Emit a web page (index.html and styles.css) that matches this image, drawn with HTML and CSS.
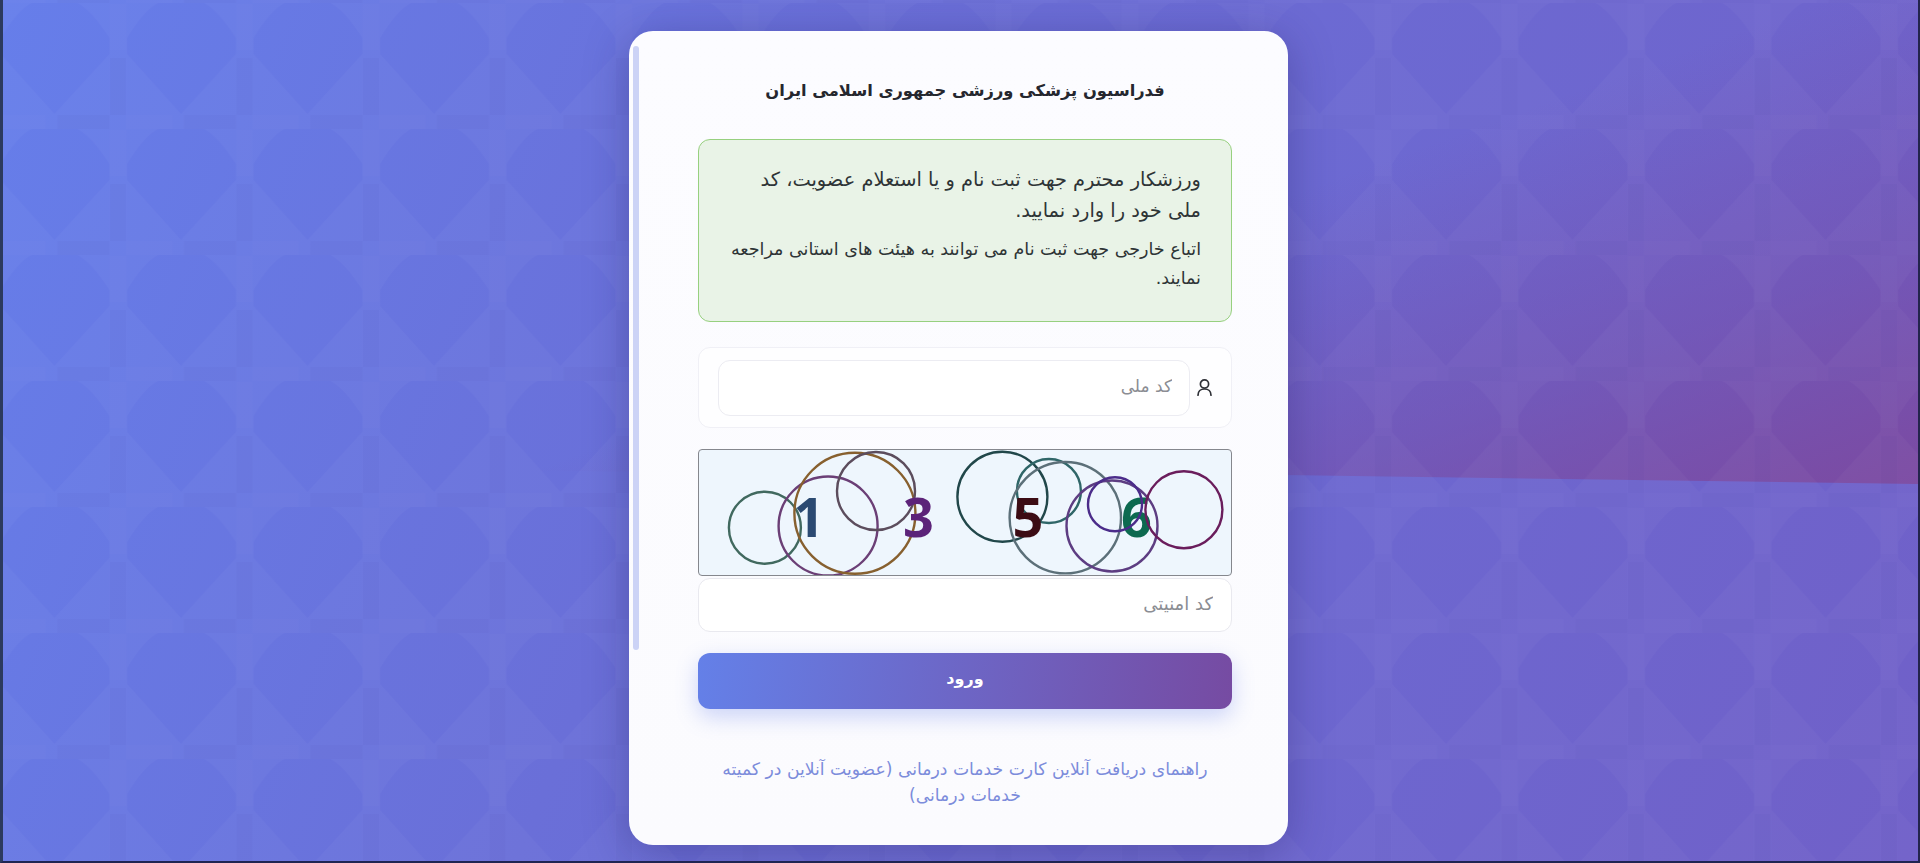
FILE: index.html
```html
<!DOCTYPE html>
<html lang="fa" dir="rtl">
<head>
<meta charset="utf-8">
<title>فدراسیون پزشکی ورزشی جمهوری اسلامی ایران</title>
<link rel="stylesheet" href="styles.css">
</head>
<body>
<main class="stage">
  <div class="tint"></div>
  <svg class="pattern" aria-hidden="true" width="100%" height="100%">
    <defs>
      <pattern id="tile" patternUnits="userSpaceOnUse" x="115" y="122" width="126.5" height="126">
        <path class="tile-light" fill-rule="evenodd" d="M0 0H126.5V126H0Z M40 7H86Q100 14 118 42V58L63 118L9 58V42Q26 14 40 7Z"/>
        <rect class="tile-bright" x="0" y="8" width="8" height="46"/>
        <rect class="tile-bright" x="118.5" y="8" width="8" height="46"/>
        <rect class="tile-bright" x="8" y="0" width="46" height="7"/>
        <rect class="tile-bright" x="8" y="119" width="46" height="7"/>
        <rect class="tile-dark" x="0" y="62" width="8" height="57"/>
        <rect class="tile-dark" x="118.5" y="62" width="8" height="57"/>
        <rect class="tile-dark" x="66" y="0" width="52" height="7"/>
        <rect class="tile-dark" x="66" y="119" width="52" height="7"/>
      </pattern>
    </defs>
    <rect width="100%" height="100%" fill="url(#tile)"/>
  </svg>

  <section class="card">
    <span class="scroll-thumb"></span>
    <h1 class="title">فدراسیون پزشکی ورزشی جمهوری اسلامی ایران</h1>

    <div class="notice">
      <p class="notice-main">ورزشکار محترم جهت ثبت نام و یا استعلام عضویت، کد ملی خود را وارد نمایید.</p>
      <p class="notice-sub">اتباع خارجی جهت ثبت نام می توانند به هیئت های استانی مراجعه نمایند.</p>
    </div>

    <div class="id-group">
      <span class="id-icon">
        <svg viewBox="0 0 15 17" width="15" height="17" fill="none" stroke="#2f3137" stroke-width="1.7" stroke-linecap="round">
          <circle cx="7.5" cy="5" r="4.1"/>
          <path d="M1 16.2C1 12.4 3.6 10 7.5 10S14 12.4 14 16.2"/>
        </svg>
      </span>
      <input class="id-input" type="text" placeholder="کد ملی">
    </div>

    <div class="captcha">
      <svg viewBox="0 0 532 125" width="532" height="125" fill="none" stroke-width="2.4">
        <circle cx="65.9" cy="77.7" r="36" stroke="#41695f"/>
        <circle cx="129.1" cy="76" r="49.5" stroke="#6b3f76"/>
        <circle cx="155.9" cy="63.3" r="60.5" stroke="#87602f"/>
        <circle cx="177" cy="41" r="39" stroke="#5c4d5d"/>
        <text class="digit" x="110" y="87" fill="#2b4a72">1</text>
        <text class="digit" x="219.5" y="87" fill="#5c2379">3</text>
        <circle cx="303.4" cy="46.7" r="45" stroke="#21474a"/>
        <circle cx="349.9" cy="41" r="32" stroke="#2f6668"/>
        <circle cx="366.3" cy="67.7" r="55.7" stroke="#5c7079"/>
        <text class="digit" x="329" y="87" fill="#3c0c14">5</text>
        <text class="digit" x="437.4" y="87" fill="#0d6a50">6</text>
        <circle cx="413" cy="76" r="45.5" stroke="#5d3d82"/>
        <circle cx="416" cy="54.3" r="27" stroke="#4b2c8a"/>
        <circle cx="484.9" cy="59.7" r="38.5" stroke="#6a1d5c"/>
      </svg>
    </div>

    <input class="code-input" type="text" placeholder="کد امنیتی">

    <button class="submit" type="button">ورود</button>

    <a class="guide" href="#">راهنمای دریافت آنلاین کارت خدمات درمانی (عضویت آنلاین در کمیته خدمات درمانی)</a>
  </section>
</main>
</body>
</html>
```

FILE: styles.css
```css
* { box-sizing: border-box; }

html, body {
  margin: 0;
  height: 100%;
  overflow: hidden;
}

body {
  font-family: "DejaVu Sans", "Noto Sans", sans-serif;
  color: #24262c;
}

.stage {
  position: relative;
  width: 1920px;
  height: 863px;
  display: flex;
  justify-content: center;
  align-items: flex-start;
  padding-right: 4px;
  border-left: 3px solid #2c3a5e;
  border-right: 2px solid #23244c;
  border-bottom: 2px solid #1f2552;
  background: linear-gradient(112deg, #667eea 0%, #6a6fd8 38%, #7060c8 100%);
  overflow: hidden;
}

.tint {
  position: absolute;
  inset: 0 0 auto 0;
  height: 486px;
  clip-path: polygon(0 0, 100% 0, 100% 484px, 1280px 475px, 0 468px);
  background: linear-gradient(160deg, rgba(120, 72, 160, 0) 56%, rgba(120, 72, 160, 0.45) 80%, rgba(124, 72, 158, 0.92) 100%);
}

.pattern {
  position: absolute;
  inset: 0;
}

.tile-light { fill: rgba(255, 255, 255, 0.028); }
.tile-bright { fill: rgba(255, 255, 255, 0.012); }
.tile-dark { fill: rgba(40, 40, 120, 0.03); }

.card {
  position: relative;
  width: 659px;
  height: 814px;
  margin-top: 31px;
  padding: 47px 56px 0 69px;
  display: flex;
  flex-direction: column;
  border-radius: 24px;
  background: linear-gradient(180deg, #fcfcff, #fbfbfe);
  box-shadow: 0 8px 44px rgba(36, 28, 96, 0.34);
}

.scroll-thumb {
  position: absolute;
  left: 4px;
  top: 15px;
  width: 6px;
  height: 604px;
  border-radius: 3px;
  background: #ccd3f6;
}

.title {
  margin: 0 0 35px;
  font-size: 16.3px;
  line-height: 26px;
  font-weight: 700;
  text-align: center;
  color: #25272e;
}

.notice {
  height: 183px;
  padding: 24px 30px 0 20px;
  border: 1px solid #97d07f;
  border-radius: 12px;
  background: #e9f3e7;
  color: #2e3436;
}

.notice p { margin: 0; }

.notice-main {
  font-size: 19.4px;
  line-height: 31px;
  padding-left: 30px;
  margin-bottom: 9px !important;
}

.notice-sub {
  font-size: 17.5px;
  line-height: 29px;
}

.id-group {
  display: flex;
  align-items: center;
  height: 81px;
  margin-top: 25px;
  padding-left: 19px;
  border: 1px solid #f0f0f6;
  border-radius: 12px;
  background: #fefeff;
}

.id-icon {
  flex: 0 0 41px;
  display: flex;
  justify-content: center;
  padding-right: 13px;
}

.id-input,
.code-input {
  border: 1px solid #e9e9ef;
  border-radius: 12px;
  background: #fff;
  font-family: inherit;
  font-size: 17px;
  outline: none;
}

.id-input::placeholder,
.code-input::placeholder {
  color: #8b8d93;
  opacity: 1;
}

.id-input {
  flex: 1;
  height: 56px;
  padding: 0 17px 4px 12px;
  border-color: #ececf2;
}

.captcha {
  height: 127px;
  margin-top: 21px;
  border: 1px solid #85878d;
  border-radius: 4px;
  background: #eef6fd;
  overflow: hidden;
}

.captcha svg { display: block; direction: ltr; }

.digit {
  font-family: "Open Sans", "DejaVu Sans", sans-serif;
  font-size: 54px;
  font-weight: 700;
  text-anchor: middle;
}

.code-input {
  height: 54px;
  margin-top: 2px;
  padding: 0 18px 3px 12px;
  font-size: 18px;
}

.submit {
  height: 56px;
  margin-top: 21px;
  padding: 0 0 5px;
  border: 0;
  border-radius: 12px;
  background: linear-gradient(96deg, #6480e8 0%, #764ba2 100%);
  box-shadow: 0 8px 22px rgba(102, 126, 234, 0.32);
  color: #fff;
  font-family: inherit;
  font-size: 16px;
  font-weight: 700;
}

.guide {
  display: block;
  margin-top: 47px;
  padding: 0 20px;
  font-size: 17.2px;
  line-height: 26px;
  text-align: center;
  text-decoration: none;
  color: #7c8cdb;
}
```
